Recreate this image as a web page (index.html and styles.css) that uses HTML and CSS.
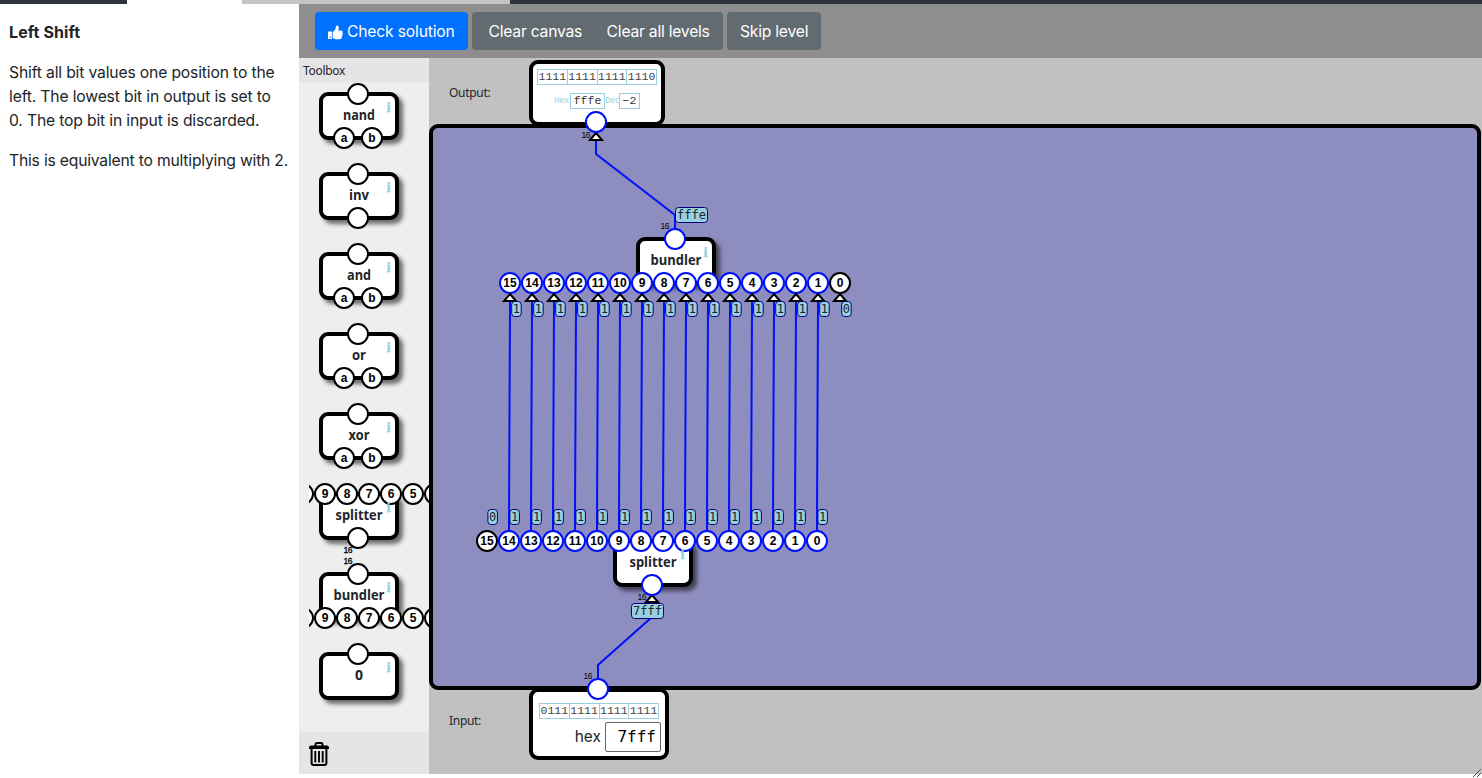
FILE: index.html
```html
<!DOCTYPE html>
<html lang="en">
<head>
<meta charset="utf-8">
<title>Left Shift</title>
<link rel="stylesheet" href="styles.css">
</head>
<body>
<div class="tabs"><div class="tab-active"></div><div class="tab-next"></div></div>
<div class="app">
  <aside class="brief">
    <h1>Left Shift</h1>
    <p>Shift all bit values one position to the<br>left. The lowest bit in output is set to<br>0. The top bit in input is discarded.</p>
    <p class="last">This is equivalent to multiplying with 2.</p>
  </aside>
  <main class="main">
    <header class="bar">
      <button class="btn primary"><svg class="thumb" viewBox="0 0 16 16"><path d="M0 7h4.200v8H0zM5 7.400C6.600 6.600 8 4.800 8.200 3.200 8.300 2 8.600 .5 9.700 .5c1.500 0 2 1.600 1.800 2.900-.1 1-.4 1.700-.7 2.400h3.300c1.300 0 1.900 1.500 1.200 2.500.6.7.5 1.700-.1 2.200.4.8.1 1.600-.5 2 .3 1.500-.5 2.700-2.200 2.700H9.500c-1.800 0-3-.9-4.500-1.200z"/><circle cx="2.100" cy="13" r=".8" class="thumb-dot"/></svg><span>Check solution</span></button>
      <div class="group"><button class="btn">Clear canvas</button><button class="btn">Clear all levels</button></div>
      <button class="btn">Skip level</button>
    </header>
    <div class="work">
      <section class="toolbox">
        <div class="toolbox-head">Toolbox</div>
        <div class="parts" id="parts"></div>
        <div class="toolbox-foot">
          <svg class="trash" viewBox="0 0 20 24"><path d="M6.500 4V2.500Q6.500 1 8 1h4Q13.500 1 13.500 2.500V4" fill="none" stroke="#000" stroke-width="2"/><path d="M0 7V5.500Q0 3.500 2 3.500H18Q20 3.500 20 5.500V7z"/><path d="M2.600 6V21Q2.600 23 4.600 23H15.400Q17.400 23 17.400 21V6" fill="none" stroke="#000" stroke-width="2"/><path d="M6.300 9V20.500M10 9V20.500M13.700 9V20.500" stroke="#000" stroke-width="1.900"/></svg>
        </div>
      </section>
      <section class="board">
        <div class="port-row out">
          <span class="port-label">Output:</span>
          <div class="port out-port">
            <div class="bits"><span>1111</span><span>1111</span><span>1111</span><span>1110</span></div>
            <div class="nums"><i>Hex</i><b>fffe</b><i>Dec</i><b class="dec">−2</b></div>
          </div>
        </div>
        <div class="canvas"></div>
        <div class="port-row in">
          <span class="port-label">Input:</span>
          <div class="port in-port">
            <div class="bits"><span>0111</span><span>1111</span><span>1111</span><span>1111</span></div>
            <div class="hexrow">hex<span class="hexbox">7fff</span></div>
          </div>
        </div>
        <svg class="wires" id="wires" viewBox="429 58 1053 716"></svg>
        <svg class="grip" viewBox="0 0 8 8"><path d="M0 8L8 0M4 8L8 4" stroke="#555" fill="none"/></svg>
      </section>
    </div>
  </main>
</div>
<script src="app.js"></script>
</body>
</html>
```
FILE: styles.css
```css
* { box-sizing: border-box; }
body { margin: 0; height: 778px; overflow: hidden; background: #fff; color: #212529; font: 16px/24px Inter, "Liberation Sans", sans-serif; }
.tabs { display: flex; height: 4px; background: #2e333d; padding-left: 127px; }
.tab-active { width: 115px; background: #fff; }
.tab-next { width: 268px; background: #c5c5c5; }
.app { display: flex; height: 770px; }
.brief { width: 299px; padding: 16px 0 0 9px; white-space: nowrap; font-size: 15.700px; letter-spacing: -0.160px; }
.brief h1 { margin: 0 0 17px; font-size: 16px; line-height: 24px; font-weight: 700; letter-spacing: 0.100px; }
.brief p { margin: 0 0 16px; }
.brief .last { letter-spacing: -0.200px; }
.main { flex: 1; display: flex; flex-direction: column; }
.bar { height: 54px; background: #8e8e8e; display: flex; align-items: center; gap: 4px; padding-left: 16px; }
.btn { height: 38px; border: 0; border-radius: 4px; background: #616b70; color: #fff; font: 15.700px/24px Inter, sans-serif; letter-spacing: -0.240px; padding: 2px 13px 0; white-space: nowrap; display: flex; align-items: center; }
.primary { background: #0070ff; width: 153px; gap: 4px; letter-spacing: -0.190px; }
.group { display: flex; width: 251px; background: #616b70; border-radius: 4px; padding-left: 4px; }
.group .btn { padding: 2px 12px 0 12.500px; }
.thumb { width: 15px; height: 15px; fill: #fff; flex: none; }
.thumb-dot { fill: #0070ff; }
.work { flex: 1; display: flex; }
.toolbox { width: 130px; background: #eee; display: flex; flex-direction: column; font: 12px/24px "Noto Sans", sans-serif; }
.toolbox-head { height: 24px; background: #e5e5e5; padding: 1px 0 0 4px; letter-spacing: -0.300px; }
.parts { flex: 1; margin-left: 10px; overflow-x: clip; overflow-y: visible; }
.part { display: block; width: 120px; height: 80px; overflow: visible; }
.toolbox-foot { height: 42px; background: #e5e5e5; padding: 10px; }
.trash { display: block; width: 20px; height: 24px; }
.board { flex: 1; position: relative; background: #c1c1c1; display: flex; flex-direction: column; }
.port-row { display: flex; height: 66px; padding: 2px 0 0 20px; }
.port-row.in { height: 84px; padding-top: 0; }
.port-label { width: 80px; padding-top: 21px; font: 12px/24px "Noto Sans", sans-serif; letter-spacing: -0.300px; }
.in .port-label { padding-top: 19px; }
.port { border: 4px solid #000; border-radius: 9px; background: #fff; }
.out-port { width: 136px; height: 66px; padding: 5px 4px; }
.in-port { width: 140px; height: 72px; margin-top: -2px; padding: 11px 4px 0 6px; }
.canvas { height: 566px; width: 1052px; background: #8e8dbf; border: 4px solid #000; border-radius: 9px; }
.bits { display: flex; width: 120px; height: 16px; border: 1px solid #99d0df; font: 11.500px/14px "Liberation Mono", monospace; color: #444; }
.bits span { flex: 1; text-align: center; }
.bits span + span { border-left: 1px solid #99d0df; }
.nums { display: flex; padding-left: 17px; margin-top: 8px; font: 11.500px/14px "Liberation Mono", monospace; color: #333; }
.nums i { font: 9px/16px "Liberation Mono", monospace; color: #99d0df; width: 16px; letter-spacing: -0.400px; }
.nums i:nth-of-type(2) { width: 14px; }
.nums b { font-weight: 400; width: 35px; height: 16px; border: 1px solid #99d0df; text-align: center; }
.nums .dec { width: 21px; }
.hexrow { display: flex; align-items: center; justify-content: flex-end; gap: 4px; height: 30px; margin-top: 3px; font-size: 15.500px; }
.hexbox { width: 56px; height: 30px; border: 1px solid #666; border-radius: 2px; text-align: right; padding-right: 4px; font: 16px/28px "DejaVu Sans Mono", monospace; color: #000; }
.wires { position: absolute; left: 0; top: 0; width: 1053px; height: 716px; }
.grip { position: absolute; right: 1px; bottom: -3px; width: 8px; height: 8px; }
.gate { fill: #fff; stroke: #000; stroke-width: 4; filter: drop-shadow(4px 4px 2px rgba(0,0,0,.55)); }
.pin { fill: #fff; stroke: #000; stroke-width: 2; }
.pin.on { stroke: #0010f8; }
.pin-text { font: 700 12px "Liberation Sans", sans-serif; text-anchor: middle; fill: #000; }
.name { font: 700 14px "Open Sans", sans-serif; text-anchor: middle; fill: #212529; }
.info { font: 700 15px "Liberation Serif", serif; text-anchor: middle; fill: #99d0df; stroke: #99d0df; stroke-width: .3; }
.wide { font: 8.500px "Liberation Sans", sans-serif; fill: #000; }
.parts .wide { stroke: #000; stroke-width: .3; }
.wire { fill: none; stroke: #0010f8; stroke-width: 2; }
.arrow { fill: #fff; stroke: #000; stroke-width: 2; }
.tag { fill: #99d0df; stroke: #000080; stroke-width: 1; }
.tag-text { font: 12px "DejaVu Sans Mono", monospace; text-anchor: middle; fill: #212529; }
```
FILE: app.js
```js
const pin = (x, y, label = '', on = false) =>
  `<circle class="pin${on ? ' on' : ''}" cx="${x}" cy="${y}" r="10"/>` +
  (label !== '' ? `<text class="pin-text" x="${x}" y="${y + 4}">${label}</text>` : '');
const box = (x, y) => `<rect class="gate" x="${x + 2}" y="${y + 2}" width="76" height="44" rx="7"/>`;
const name = (x, y, text, w) => `<text class="name" x="${x + 40}" y="${y}" textLength="${w}" lengthAdjust="spacingAndGlyphs">${text}</text>`;
const info = (x, y) => `<text class="info" x="${x + 69.5}" y="${y + 20}">i</text>`;
const wide = (x, y) => `<text class="wide" x="${x}" y="${y}" textLength="9">16</text>`;

// Toolbox parts: each gate sits 10px right and 10px down in its cell
const row = y => [9, 8, 7, 6, 5].map((n, i) => pin(16 + 22 * i, y, n)).join('') + pin(-6, y) + pin(126, y);
const ab = pin(35, 56, 'a') + pin(63, 56, 'b');
const top1 = pin(49, 12);
const parts = [
  ['nand', 32, top1 + ab], ['inv', 20, top1 + pin(49, 56)], ['and', 24, top1 + ab],
  ['or', 14, top1 + ab], ['xor', 21, top1 + ab],
  ['splitter', 47, row(12) + pin(49, 56) + wide(34.5, 71)],
  ['bundler', 51, top1 + row(56) + wide(34.5, 2)],
  ['0', 8, top1]
];
document.getElementById('parts').innerHTML = parts.map(([label, w, pins]) =>
  `<svg class="part" viewBox="0 0 120 80">${box(10, 10)}${pins}${name(10, 38, label, w)}${info(10, 10)}</svg>`).join('');

// Circuit on the board
const tag = (x, y, text, w) =>
  `<rect class="tag" x="${x + .5}" y="${y + .5}" width="${w - 1}" height="15" rx="3"/><text class="tag-text" x="${x + w / 2}" y="${y + 12}">${text}</text>`;
const arrow = (x, y) => `<path class="arrow" d="M${x} ${y + 2}L${x + 6} ${y + 9}H${x - 6}Z"/>`;
const line = d => `<path class="wire" d="${d}"/>`;

let s = box(636, 237) + box(613, 539);
for (let n = 0; n < 15; n++) {
  const x = 817 - 22 * n;
  s += line(`M${x} 541V517L${x + 1} 307V290`);
}
s += line('M596 135V154L675 215V239') + line('M598 689V665L652 617V595');
for (let n = 0; n < 16; n++) {
  const lo = 817 - 22 * n, hi = 840 - 22 * n;
  s += pin(lo, 541, n, n < 15) + pin(hi, 283, n, n > 0) + arrow(hi, 292);
  s += tag(lo + .4, 509, n < 15 ? 1 : 0, 10.5) + tag(hi + 1.2, 301, n > 0 ? 1 : 0, 10.5);
}
s += arrow(596, 131) + arrow(652, 593);
s += pin(596, 122, '', true) + pin(675, 239, '', true) + pin(652, 585, '', true) + pin(598, 689, '', true);
s += name(636, 265, 'bundler', 51) + info(636, 237) + name(613, 567, 'splitter', 47) + info(613, 539);
s += tag(675, 207, 'fffe', 33) + tag(631, 603, '7fff', 33);
s += wide(581.5, 137.5) + wide(660.5, 229) + wide(637.5, 600) + wide(583.5, 679);
document.getElementById('wires').innerHTML = s;
```
